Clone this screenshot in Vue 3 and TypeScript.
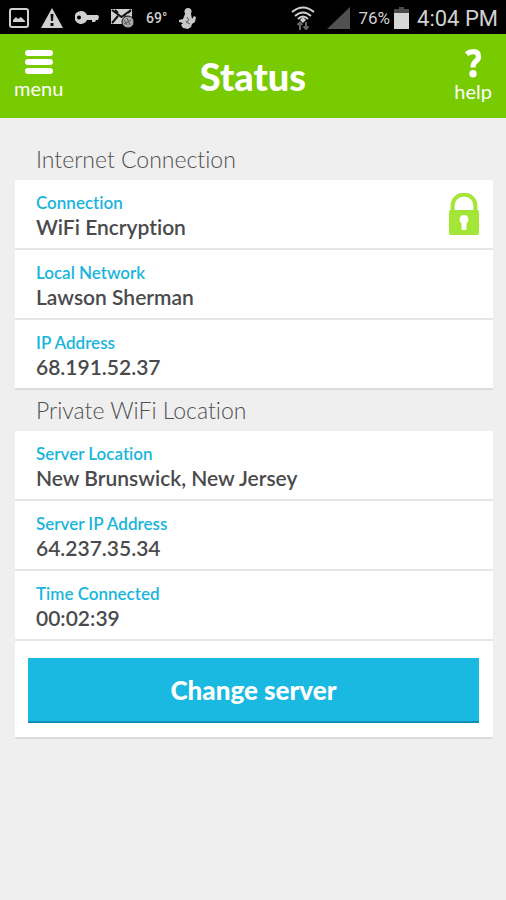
<script setup lang="ts">
interface Row {
  label: string
  value: string
  locked?: boolean
}

const connectionRows: Row[] = [
  { label: 'Connection', value: 'WiFi Encryption', locked: true },
  { label: 'Local Network', value: 'Lawson Sherman' },
  { label: 'IP Address', value: '68.191.52.37' },
]

const locationRows: Row[] = [
  { label: 'Server Location', value: 'New Brunswick, New Jersey' },
  { label: 'Server IP Address', value: '64.237.35.34' },
  { label: 'Time Connected', value: '00:02:39' },
]
</script>

<template>
  <div class="screen">
    <div class="system-bar">
      <div class="notices">
        <svg width="20" height="20" viewBox="0 0 20 20" aria-hidden="true">
          <rect x="1" y="1" width="18" height="18" rx="2" fill="none" stroke="#d0d0d0" stroke-width="2" />
          <path d="M4 14v-2l3-3 2 2 3-2 4 4v1z" fill="#d0d0d0" />
        </svg>
        <svg width="22" height="20" viewBox="0 0 22 20" aria-hidden="true">
          <path d="M11 0L22 20H0z" fill="#d0d0d0" />
          <path d="M9.500 6h3l-.5 7h-2zM9.500 15h3v3h-3z" fill="#111" />
        </svg>
        <svg width="24" height="14" viewBox="0 0 24 14" aria-hidden="true">
          <path fill-rule="evenodd" d="M6 0a6.500 6.500 0 0 1 6 4h11l1 2-1 3h-2l-1 2h-3V9h-5A6.500 6.500 0 1 1 6 0zM4 4.500a2 2 0 1 0 0 4 2 2 0 0 0 0-4z" fill="#d0d0d0" />
        </svg>
        <svg width="23" height="20" viewBox="0 0 23 20" aria-hidden="true">
          <path d="M0 1h21v15H0z" fill="#d0d0d0" />
          <path d="M1 2l9.500 7L20 2M1 15l6-7M14 8l3 3M4 2l3 3M17 5l3-3" fill="none" stroke="#111" stroke-width="2" />
          <circle cx="17" cy="14" r="6" fill="#a8a8a8" stroke="#111" />
          <path d="M13 12l3 5M16 10l3 7M13 16l7-4" stroke="#555" fill="none" />
        </svg>
        <span class="temperature">69°</span>
        <svg width="18" height="21" viewBox="0 0 18 21" aria-hidden="true">
          <circle cx="9" cy="3.500" r="3.500" fill="#c8c8c8" />
          <path d="M6 6h6l1 5 2-3 2 1-1 5-3 2-1 3-3 2-5-1-2-3 2-2-4-1v-2l4-1z" fill="#c8c8c8" />
          <path d="M8 9l2 3-3 2 4 2" fill="none" stroke="#555" />
        </svg>
      </div>
      <div class="signals">
        <svg class="wifi" width="24" height="24" viewBox="0 0 24 24" aria-hidden="true">
          <g fill="none" stroke="#cfcfcf" stroke-width="2">
            <path d="M1 6Q12-3 23 6" />
            <path d="M4 10Q12 3 20 10" />
            <path d="M7 13Q12 8 17 13" />
          </g>
          <path d="M12 11l3 3-3 3-3-3z" fill="#cfcfcf" />
          <path d="M9 24V17M6.500 19L9 16.500l2.500 2.500M15 16v7M12.500 20.500L15 23l2.500-2.500" fill="none" stroke="#666" stroke-width="2" />
        </svg>
        <svg width="23" height="22" viewBox="0 0 23 22" aria-hidden="true">
          <path d="M23 0v22H0z" fill="#505050" />
        </svg>
        <span class="percent">76%</span>
        <svg class="battery" width="15" height="22" viewBox="0 0 15 22" aria-hidden="true">
          <path d="M5 0h5v2h5v5H0V2h5z" fill="#4b4b4b" />
          <path d="M0 6h15v16H0z" fill="#d6d6d6" />
        </svg>
        <span class="clock">4:04 PM</span>
      </div>
    </div>

    <header class="app-bar">
      <button class="nav-button" type="button">
        <svg width="30" height="24" viewBox="0 0 30 24" aria-hidden="true">
          <g fill="#fff">
            <rect x="1" y="0" width="28" height="6" rx="3" />
            <rect x="1" y="9" width="28" height="6" rx="3" />
            <rect x="1" y="18" width="28" height="6" rx="3" />
          </g>
        </svg>
        <span>menu</span>
      </button>
      <h1>Status</h1>
      <button class="nav-button help" type="button">
        <svg width="18" height="30" viewBox="0 0 18 30" aria-hidden="true">
          <path d="M2.500 6Q5.500 3.600 9.500 3.600Q14.500 3.600 14.500 8.500Q14.500 11.500 11.500 13.500Q9 15.500 9 19.500" fill="none" stroke="#fff" stroke-width="5.200" />
          <circle cx="9" cy="25.800" r="3.700" fill="#fff" />
        </svg>
        <span>help</span>
      </button>
    </header>

    <main>
      <section>
        <h2>Internet Connection</h2>
        <div class="card">
          <dl>
            <div v-for="row in connectionRows" :key="row.label" class="row">
              <div class="entry">
                <dt>{{ row.label }}</dt>
                <dd>{{ row.value }}</dd>
              </div>
              <svg v-if="row.locked" width="32" height="43" viewBox="0 0 32 43" aria-hidden="true">
                <path d="M4.500 20V13a11.500 11.500 0 0 1 23 0v7" fill="none" stroke="#a3e635" stroke-width="4" />
                <path fill-rule="evenodd" d="M3 17h26a2 2 0 0 1 2 2v21a2 2 0 0 1-2 2H3a2 2 0 0 1-2-2V19a2 2 0 0 1 2-2zM16 22a4.500 4.500 0 0 0-2.500 8.200V37h5v-6.800A4.500 4.500 0 0 0 16 22z" fill="#a3e635" />
              </svg>
            </div>
          </dl>
        </div>
      </section>

      <section>
        <h2>Private WiFi Location</h2>
        <div class="card">
          <dl>
            <div v-for="row in locationRows" :key="row.label" class="row">
              <div class="entry">
                <dt>{{ row.label }}</dt>
                <dd>{{ row.value }}</dd>
              </div>
            </div>
          </dl>
          <div class="action">
            <button class="primary" type="button">Change server</button>
          </div>
        </div>
      </section>
    </main>
  </div>
</template>

<style>
body {
  margin: 0;
  background: #efefef;
}
</style>

<style scoped>
.screen {
  min-height: 100vh;
  background: #efefef;
  color: #4a4a4c;
  font-family: Lato, "Liberation Sans", sans-serif;
  font-variant-ligatures: none;
}

.system-bar {
  display: flex;
  align-items: center;
  justify-content: space-between;
  height: 34px;
  padding: 2px 8px 0 9px;
  box-sizing: border-box;
  background: #000;
  color: #d0d0d0;
  font-family: Roboto, "Liberation Sans", sans-serif;
}

.notices,
.signals {
  display: flex;
  align-items: center;
}

.notices {
  gap: 12px;
}

.signals {
  gap: 8px;
}

.wifi {
  margin-right: 4px;
}

.temperature {
  font-size: 14px;
  font-weight: 500;
}

.percent {
  font-size: 17px;
}

.battery {
  margin-left: -4px;
}

.clock {
  font-size: 22px;
}

.app-bar {
  display: grid;
  grid-template-columns: 1fr auto 1fr;
  align-items: center;
  height: 84px;
  padding: 0 14px;
  background: #78cb00;
  color: #fff;
}

h1 {
  margin: 0;
  font-size: 38px;
  font-weight: 900;
  line-height: 46px;
}

.nav-button {
  display: flex;
  flex-direction: column;
  align-items: center;
  justify-self: start;
  gap: 3px;
  padding: 0 0 3px;
  border: 0;
  background: none;
  color: inherit;
  font-family: inherit;
  font-size: 20px;
  line-height: 22px;
}

.help {
  justify-self: end;
  gap: 2px;
}

main {
  padding: 21px 13px 0 15px;
}

h2 {
  margin: 0;
  padding: 0 21px;
  color: #505052;
  font-size: 23px;
  font-weight: 300;
  line-height: 41px;
}

.card {
  background: #fff;
  border-bottom: 2px solid #dcdcdc;
}

dl,
dd {
  margin: 0;
}

.row {
  display: flex;
  align-items: center;
  justify-content: space-between;
  box-sizing: border-box;
  height: 70px;
  padding: 0 13px 0 21px;
  border-bottom: 2px solid #e6e6e6;
}

.entry {
  padding-top: 3px;
}

.card > dl:last-child > .row:last-child {
  height: 68px;
  border-bottom: 0;
}

dt {
  color: #19b5dc;
  font-size: 17px;
  font-weight: 600;
  line-height: 22px;
}

dd {
  font-size: 21px;
  font-weight: 600;
  line-height: 25px;
}

.action {
  padding: 17px 14px 14px 13px;
}

.primary {
  display: block;
  width: 100%;
  height: 65px;
  padding: 0;
  border: 0;
  border-bottom: 2px solid #128fb8;
  background: #19b9e1;
  color: #fff;
  font-family: inherit;
  font-size: 26px;
  font-weight: 900;
}
</style>
